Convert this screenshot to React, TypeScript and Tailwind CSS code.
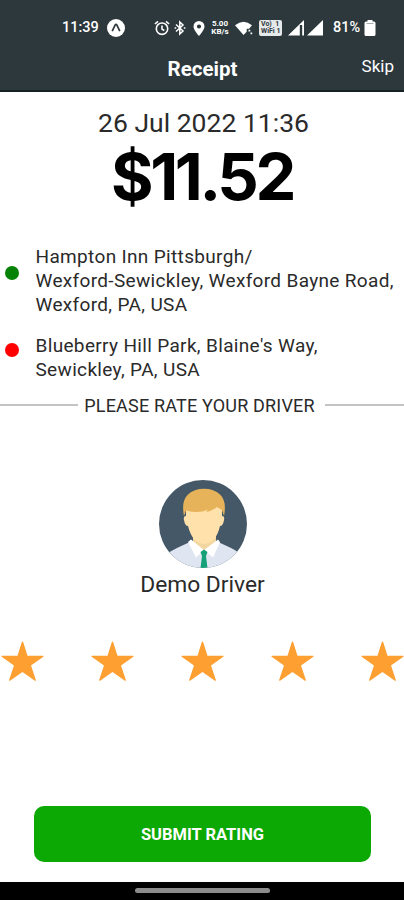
import { ReactNode } from "react";

function StatusBar() {
  return (
    <div className="flex h-[56px] items-center pl-[62px] text-[14.5px] font-medium leading-none text-white">
      <span className="w-[45px]">11:39</span>
      <svg className="h-[18px] w-[18px]" viewBox="0 0 18 18">
        <circle cx="9" cy="9" r="9" fill="#fff" />
        <path d="M5.2 12.2 8.2 6q.8-1.2 1.6 0l3 6.2" fill="none" stroke="#2d383d" strokeWidth="1.7" />
      </svg>
      <svg className="ml-[29px] h-4 w-4" viewBox="0 0 16 16" fill="none" stroke="#fff" strokeWidth="1.6">
        <circle cx="8" cy="8.7" r="5.7" />
        <path d="M8 5.5v3.6l2.3 1.4M.9 4 4 1.4M15.1 4 12 1.4" />
      </svg>
      <svg className="ml-[4px] h-4 w-3" viewBox="0 0 12 16" fill="none" stroke="#fff" strokeWidth="1.5">
        <path d="m2 4.500 7 6.500-3.200 3V2L9 5 2 11.500" />
        <path d="M.6 8h1.600M9.800 8h1.600" />
      </svg>
      <svg className="ml-[7px] h-[15px] w-3" viewBox="0 0 12 15" fill="#fff">
        <path fillRule="evenodd" d="M6 0a5.500 5.500 0 0 0-5.500 5.500C.5 9 6 15 6 15s5.500-6 5.500-9.500A5.500 5.500 0 0 0 6 0Zm0 3.400a2.100 2.100 0 1 1 0 4.200 2.100 2.100 0 0 1 0-4.200Z" />
      </svg>
      <div className="ml-[5px] flex w-5 flex-col items-center text-[8px] font-bold leading-[8px]">
        <span>5.00</span>
        <span>KB/s</span>
      </div>
      <svg className="ml-[5px] h-[14px] w-[18px]" viewBox="0 0 18 14" fill="#fff">
        <path d="M0 4.200Q8.500-2.800 17 4.200L14 7.800h-2.300v3L8.500 14Z" />
        <path d="M13.500 8.700h1.800v1.800h-1.800zM15.500 11.500h1.700v1.700h-1.700z" />
      </svg>
      <div className="ml-[6px] flex h-4 w-[23px] flex-col justify-center rounded-[2px] bg-[#e6e9ea] pl-[2px] text-[7px] font-bold leading-[7px] text-[#2d383d]">
        <span>Vo&#41;&nbsp; 1</span>
        <span>WiFi 1</span>
      </div>
      <svg className="ml-[6px] h-4 w-[36px]" viewBox="0 0 36 16" fill="#fff">
        <path d="M0 15.500 16 0v15.500h-1.800V5h-2.400v10.500Z" />
        <path d="M19 15.500 35 0v15.500Z" />
      </svg>
      <span className="ml-[9px] w-[31px]">81%</span>
      <svg className="h-4 w-3" viewBox="0 0 12 16" fill="#fff">
        <path d="M3.500 0h5v1.500H10A1.500 1.500 0 0 1 11.500 3v11.500A1.500 1.500 0 0 1 10 16H2a1.500 1.500 0 0 1-1.500-1.500V3A1.500 1.500 0 0 1 2 1.500h1.500Z" />
        <path d="M2.500 3.500h7" stroke="#a4acb0" />
      </svg>
    </div>
  );
}

function Stop({ color, children }: { color: string; children: ReactNode }) {
  return (
    <div className="flex items-center pl-[5px]">
      <span className={`mb-[17px] size-[14px] shrink-0 rounded-full ${color}`} />
      <p className="ml-[16.5px] whitespace-nowrap text-[19px] leading-[24px] tracking-[0.34px]">{children}</p>
    </div>
  );
}

function Avatar() {
  return (
    <svg className="size-[88px]" viewBox="0 0 88 88">
      <clipPath id="face">
        <circle cx="44" cy="44" r="44" />
      </clipPath>
      <g clipPath="url(#face)">
        <rect width="88" height="88" fill="#455867" />
        <path d="M6 76q5-5 12-8l15-7h24l15 7q7 3 10 8v12H6Z" fill="#dfe6f2" />
        <path d="M34 55h23v10L45 71 34 66Z" fill="#f3d69f" />
        <path d="M32 59.500 45 70l-8 7.500-8-15.500ZM59 59.500 45 70l9 7.500 7-15.500Z" fill="#fff" />
        <path d="m41.500 72 3.500-2.500 3.500 2.500-1.500 4 1.500 12h-7l1.500-12Z" fill="#16a078" />
        <path d="M27 20h36v16q3 0 2 4-1 6-4 6-2 9-7 14.500-9 7-18 0-5-6-7-14.500-3 0-4-6-1-4 2-4Z" fill="#ffe1ac" />
        <path d="M25 36q-3-15 4-21.500Q35 8.700 45 8.700t16 5.800q7 6.500 4 21.500l-2-6-5-3q-5 4-11 5l2-2.500q-9 4.500-22 1Z" fill="#e7b35a" />
      </g>
    </svg>
  );
}

function Star() {
  return (
    <svg className="h-[41px] w-[43px] shrink-0" viewBox="0 0 43 41">
      <path
        d="M21.500 1 26 15.300h16L29.300 24.300l5 14.900-12.800-9-12.800 9 5-14.900L1 15.300h16Z"
        fill="#fe9f32"
        stroke="#fe9f32"
        strokeWidth="1.2"
        strokeLinejoin="round"
      />
    </svg>
  );
}

export default function App() {
  return (
    <div className="flex h-[900px] w-[404px] flex-col overflow-hidden bg-white font-['Roboto',sans-serif] text-[#2a2a2a]">
      <header className="h-[92px] border-b-2 border-[#162126] bg-[#2d383d] text-white">
        <StatusBar />
        <div className="grid grid-cols-[1fr_auto_1fr] items-start pr-[10px]">
          <span />
          <h1 className="pl-[11px] pt-[1px] text-[20.5px] font-bold leading-6">Receipt</h1>
          <button className="justify-self-end text-[17px] leading-5">Skip</button>
        </div>
      </header>

      <main className="flex flex-1 flex-col">
        <div className="flex flex-col items-center pt-[15px]">
          <p className="pl-[3px] text-[26.5px] leading-[32px] tracking-[0.01px]">26 Jul 2022 11:36</p>
          <p className="font-['Inter',sans-serif] text-[65px] font-bold leading-[76px] tracking-[-3.4px] text-black">$11.52</p>
        </div>

        <div className="mt-[30px] flex flex-col gap-[17px]">
          <Stop color="bg-[#068306]">
            Hampton Inn Pittsburgh/
            <br />
            Wexford-Sewickley, Wexford Bayne Road,
            <br />
            Wexford, PA, USA
          </Stop>
          <Stop color="bg-[#fe0000]">
            Blueberry Hill Park, Blaine's Way,
            <br />
            Sewickley, PA, USA
          </Stop>
        </div>

        <div className="mt-[12px] flex items-center">
          <span className="mb-[3px] h-[2px] w-[78px] bg-[#c4c4c4]" />
          <span className="flex-1 pr-[4px] text-center text-[18px] leading-[24px] tracking-[0.18px]">PLEASE RATE YOUR DRIVER</span>
          <span className="mb-[3px] h-[2px] w-[79px] bg-[#c4c4c4]" />
        </div>

        <div className="mt-[62px] flex flex-col items-center pl-[1px]">
          <Avatar />
          <p className="pt-[1px] text-[22.8px] leading-[31px]">Demo Driver</p>
        </div>

        <div className="mt-[41px] flex justify-between pl-[1px]">
          <Star />
          <Star />
          <Star />
          <Star />
          <Star />
        </div>

        <button className="mx-auto mb-[20px] mt-auto h-[56px] w-[337px] rounded-[10px] bg-[#0ca904] pl-[1px] pt-[2px] text-[16.5px] font-bold text-white">
          SUBMIT RATING
        </button>
      </main>

      <footer className="flex h-[18px] justify-center bg-black pt-[6px]">
        <span className="h-[5px] w-[135px] rounded-full bg-[#8c8c8c]" />
      </footer>
    </div>
  );
}
